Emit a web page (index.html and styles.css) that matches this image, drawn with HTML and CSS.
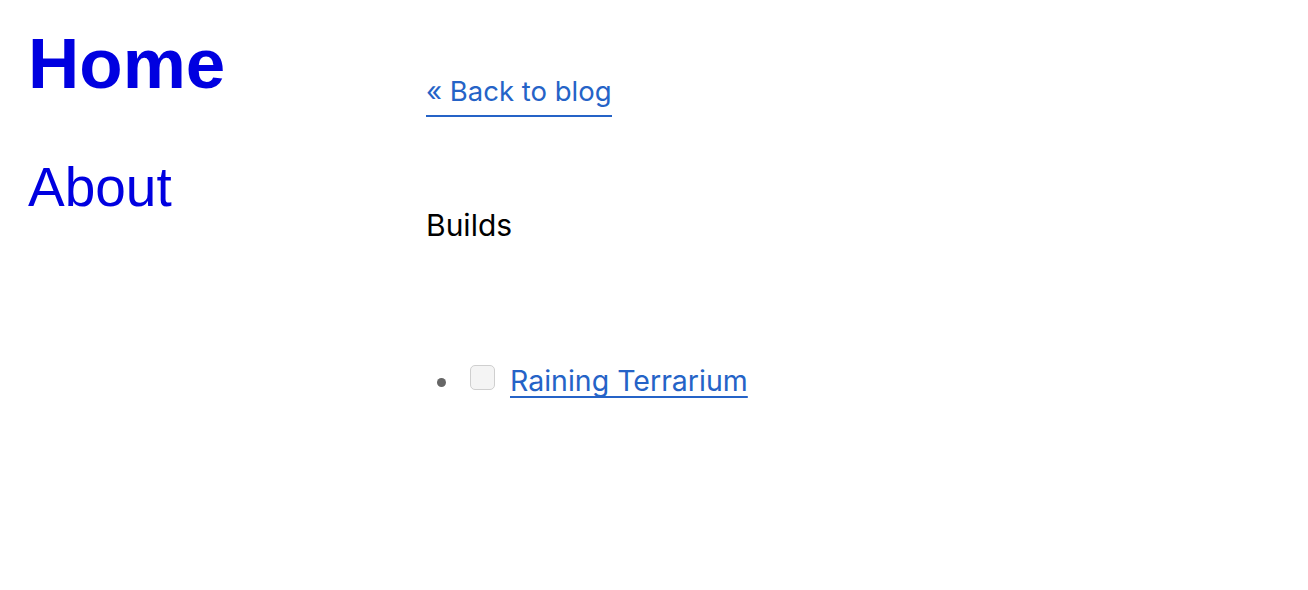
FILE: index.html
```html
<!DOCTYPE html>
<html>
<head>
<meta charset="utf-8">
<link rel="stylesheet" href="styles.css">
</head>
<body>
<div class="page">
  <nav class="side">
    <a class="home" href="#">Home</a>
    <a class="about" href="#">About</a>
  </nav>
  <main class="main">
    <a class="back" href="#">« Back to blog</a>
    <p class="cat">Builds</p>
    <ul class="list">
      <li><input type="checkbox" class="chk"><a class="post" href="#">Raining Terrarium</a></li>
    </ul>
  </main>
</div>
</body>
</html>
```
FILE: styles.css
```css
html, body { margin: 0; padding: 0; background: #fff; }
.page { display: flex; }
.side { flex: 0 0 426px; padding-left: 28px; box-sizing: border-box; display: flex; flex-direction: column; align-items: flex-start; padding-top: 22px; }
.side a { color: #0000e0; text-decoration: none; font-family: "Liberation Sans", Arial, sans-serif; }
.home { font-size: 71px; font-weight: bold; line-height: 84px; }
.about { font-size: 55px; line-height: 64px; margin-top: 49px; }
.main { font-family: Inter, sans-serif; padding-top: 74px; display: flex; flex-direction: column; align-items: flex-start; }
.back { color: #2563c7; text-decoration: none; font-size: 27.5px; line-height: 34px; border-bottom: 2px solid #2563c7; padding-bottom: 7px; }
.cat { font-size: 30px; margin: 90px 0 0 0; line-height: 36px; color: #000; }
.list { margin: 121px 0 0 0; padding-left: 36px; font-size: 28.5px; line-height: 34px; }
.list li { color: #666; }
.chk { appearance: none; width: 25px; height: 25px; border: 1.5px solid #cfcfcf; border-radius: 5px; background: #f4f4f4; margin: 0 15px 0 8px; vertical-align: 1px; box-sizing: border-box; }
.post { color: #2563c7; text-decoration: underline; text-decoration-color: #2563c7; text-decoration-thickness: 2px; text-underline-offset: 5px; text-decoration-skip-ink: none; }
```
